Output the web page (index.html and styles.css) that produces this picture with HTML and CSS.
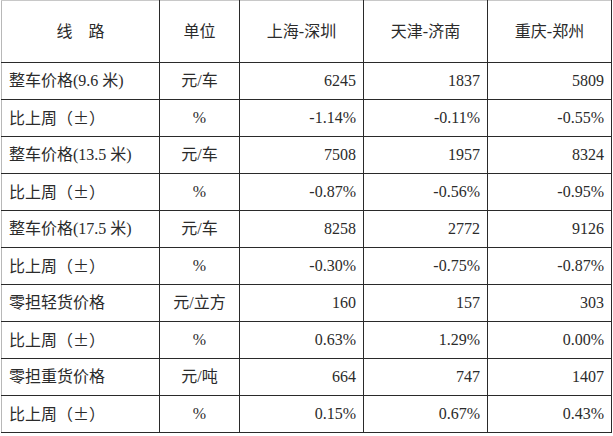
FILE: index.html
```html
<!DOCTYPE html>
<html lang="zh">
<head>
<meta charset="utf-8">
<link rel="stylesheet" href="styles.css">
</head>
<body>
<table class="price">
  <colgroup>
    <col class="c-route">
    <col class="c-unit">
    <col class="c-val">
    <col class="c-val">
    <col class="c-val">
  </colgroup>
  <thead>
    <tr class="head">
      <th>线　路</th>
      <th>单位</th>
      <th>上海-深圳</th>
      <th>天津-济南</th>
      <th>重庆-郑州</th>
    </tr>
  </thead>
  <tbody>
    <tr><td class="name">整车价格(9.6 米)</td><td class="unit">元/车</td><td class="num">6245</td><td class="num">1837</td><td class="num">5809</td></tr>
    <tr><td class="name">比上周<span class="cjk">（±）</span></td><td class="unit">%</td><td class="num">-1.14%</td><td class="num">-0.11%</td><td class="num">-0.55%</td></tr>
    <tr><td class="name">整车价格(13.5 米)</td><td class="unit">元/车</td><td class="num">7508</td><td class="num">1957</td><td class="num">8324</td></tr>
    <tr><td class="name">比上周<span class="cjk">（±）</span></td><td class="unit">%</td><td class="num">-0.87%</td><td class="num">-0.56%</td><td class="num">-0.95%</td></tr>
    <tr><td class="name">整车价格(17.5 米)</td><td class="unit">元/车</td><td class="num">8258</td><td class="num">2772</td><td class="num">9126</td></tr>
    <tr><td class="name">比上周<span class="cjk">（±）</span></td><td class="unit">%</td><td class="num">-0.30%</td><td class="num">-0.75%</td><td class="num">-0.87%</td></tr>
    <tr><td class="name">零担轻货价格</td><td class="unit">元/立方</td><td class="num">160</td><td class="num">157</td><td class="num">303</td></tr>
    <tr><td class="name">比上周<span class="cjk">（±）</span></td><td class="unit">%</td><td class="num">0.63%</td><td class="num">1.29%</td><td class="num">0.00%</td></tr>
    <tr><td class="name">零担重货价格</td><td class="unit">元/吨</td><td class="num">664</td><td class="num">747</td><td class="num">1407</td></tr>
    <tr><td class="name">比上周<span class="cjk">（±）</span></td><td class="unit">%</td><td class="num">0.15%</td><td class="num">0.67%</td><td class="num">0.43%</td></tr>
  </tbody>
</table>
</body>
</html>
```
FILE: styles.css
```css
html, body {
  margin: 0;
  padding: 0;
  background: #ffffff;
}

body {
  font-family: "Liberation Serif", "Noto Sans CJK SC", serif;
  font-size: 16px;
  color: #2b2b2b;
}

.price {
  border-collapse: collapse;
  table-layout: fixed;
  width: 610px;
  margin-left: 1px;
}

.c-route { width: 158px; }
.c-unit { width: 80px; }
.c-val { width: 124px; }

.price th,
.price td {
  border: 1px solid #2a2a2a;
  padding: 0 7px;
  height: 36px;
  line-height: 20px;
  white-space: nowrap;
  vertical-align: middle;
}

.price thead th {
  border-top-color: #c8c8c8;
  font-weight: normal;
  text-align: center;
  height: 61px;
}

.price tr > :first-child {
  border-left-color: #b8b8b8;
}

.price .name {
  text-align: left;
}

.price .unit {
  text-align: center;
}

.price .num {
  text-align: right;
}

.cjk {
  font-family: "Noto Sans CJK SC", sans-serif;
}
```
